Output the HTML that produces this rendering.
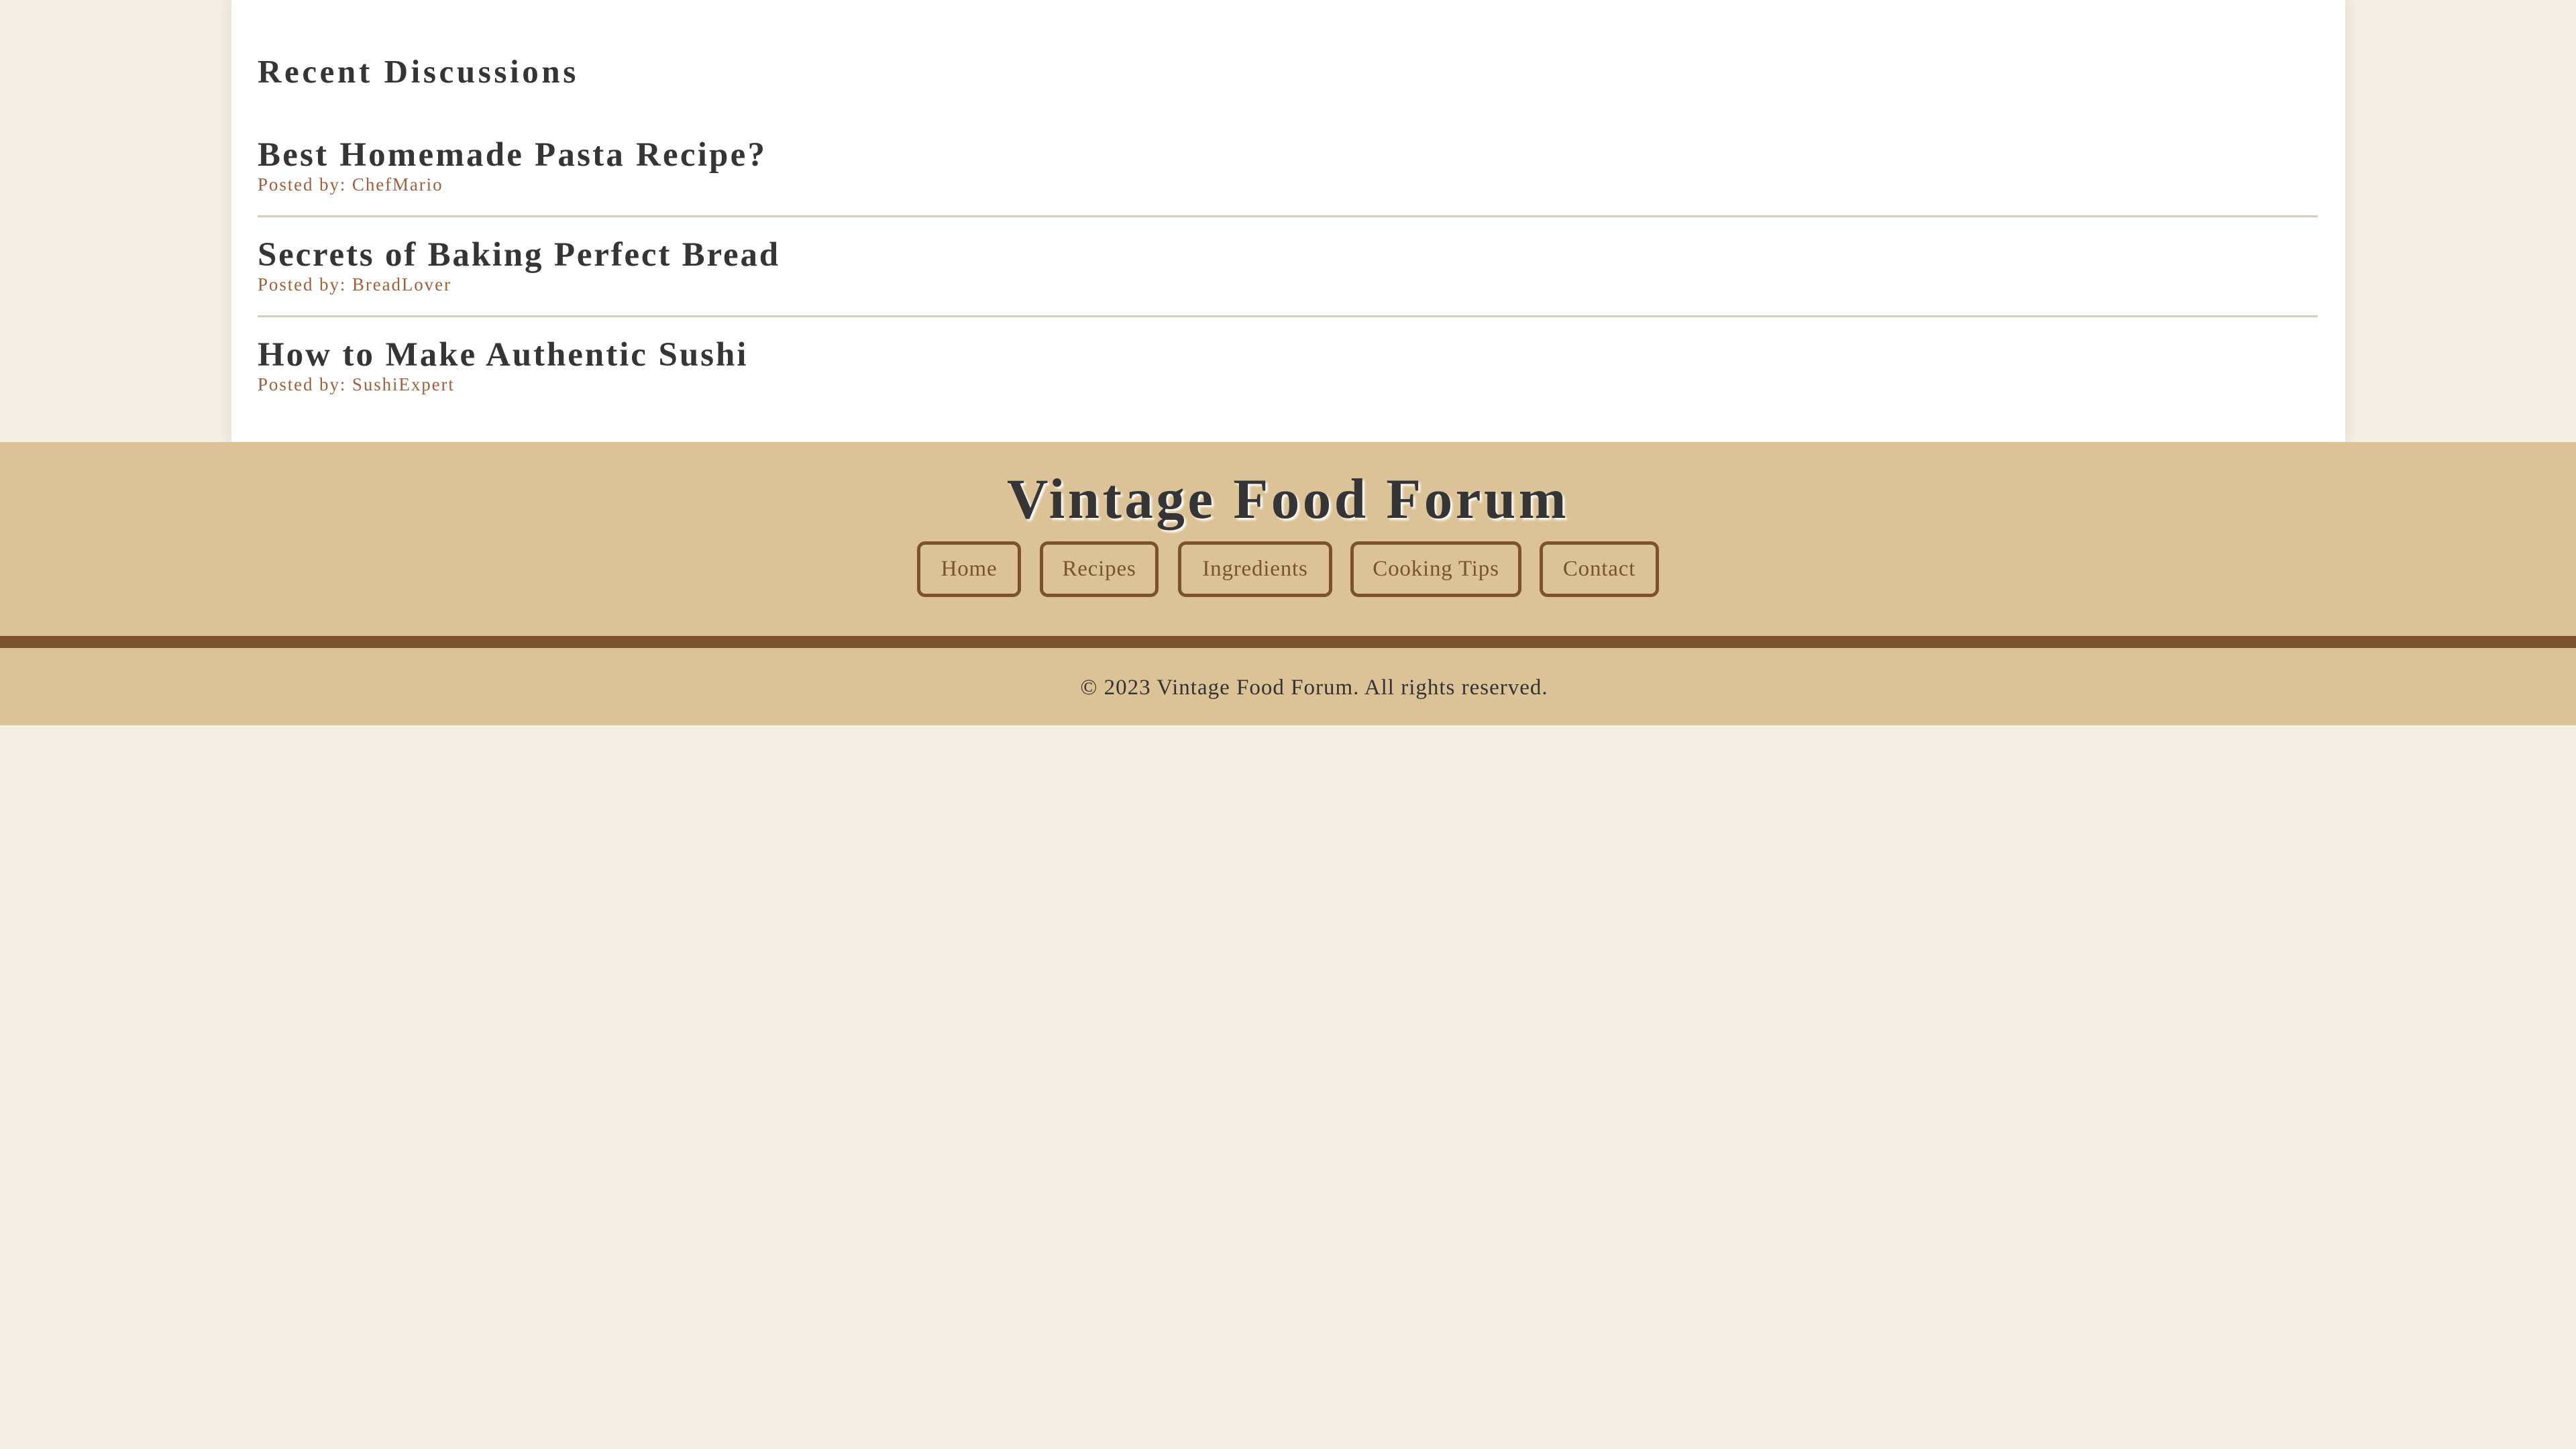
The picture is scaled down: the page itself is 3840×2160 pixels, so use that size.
<!DOCTYPE html>
<html><head><meta charset="utf-8"><style>
*{margin:0;padding:0;box-sizing:border-box}
html,body{width:3840px;height:2160px;background:#f3efe4;overflow:hidden;font-family:"Liberation Serif",serif;position:relative}
.card{position:absolute;left:345px;top:0;width:3151px;height:659px;background:#fff;box-shadow:0 0 24px rgba(120,100,60,0.15)}
.t{position:absolute;line-height:1;white-space:nowrap}
.h{color:#353535;font-weight:bold}
.p{color:#a0603a;font-size:27px;letter-spacing:1.9px;left:384px}
.hr{position:absolute;left:384px;width:3071px;height:3px;background:#d6cfbf}
.band{position:absolute;left:0;width:3840px;background:#dbc397}
.nav{position:absolute;top:807px;height:83px;border:5px solid #7a5230;border-radius:12px;color:#7a5230;font-size:33px;display:flex;align-items:center;justify-content:center;letter-spacing:0.8px}
</style></head><body>
<div class="card"></div>
<div class="t h" style="left:384px;top:82px;font-size:49px;letter-spacing:4.6px">Recent Discussions</div>
<div class="t h" style="left:384px;top:206px;font-size:51px;letter-spacing:3.2px">Best Homemade Pasta Recipe?</div>
<div class="t p" style="top:262px">Posted by: ChefMario</div>
<div class="hr" style="top:321px"></div>
<div class="t h" style="left:384px;top:355px;font-size:51px;letter-spacing:2.8px">Secrets of Baking Perfect Bread</div>
<div class="t p" style="top:411px">Posted by: BreadLover</div>
<div class="hr" style="top:470px"></div>
<div class="t h" style="left:384px;top:504px;font-size:51px;letter-spacing:2.95px">How to Make Authentic Sushi</div>
<div class="t p" style="top:560px">Posted by: SushiExpert</div>

<div class="band" style="top:659px;height:289px"></div>
<div style="position:absolute;left:0;top:948px;width:3840px;height:18px;background:#7a5230"></div>
<div class="band" style="top:966px;height:115px"></div>

<div class="t h" style="left:0;width:3840px;text-align:center;top:702px;font-size:85px;letter-spacing:4.5px;text-shadow:3px 3px 3px #fff">Vintage Food Forum</div>

<div class="nav" style="left:1367px;width:155px">Home</div>
<div class="nav" style="left:1550px;width:177px">Recipes</div>
<div class="nav" style="left:1756px;width:230px">Ingredients</div>
<div class="nav" style="left:2013px;width:255px">Cooking Tips</div>
<div class="nav" style="left:2295px;width:178px">Contact</div>

<div class="t" style="left:39px;width:3840px;text-align:center;top:1009px;font-size:33px;color:#333;letter-spacing:1px">© 2023 Vintage Food Forum. All rights reserved.</div>
</body></html>
